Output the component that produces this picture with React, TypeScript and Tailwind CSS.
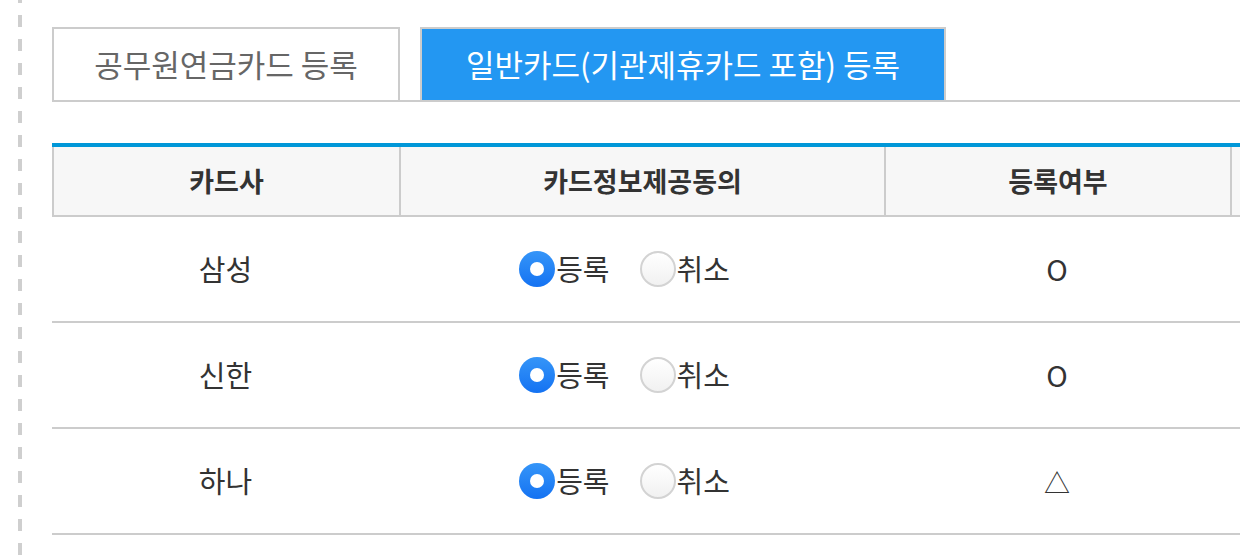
import React from 'react';

type Row = { company: string; status: string };

const rows: Row[] = [
  { company: '삼성', status: 'O' },
  { company: '신한', status: 'O' },
  { company: '하나', status: '△' },
];

function Radio({ checked, label }: { checked: boolean; label: string }) {
  return (
    <label className="flex items-center mr-[30px]">
      {checked ? (
        <span className="flex items-center justify-center w-[36px] h-[36px] rounded-full bg-gradient-to-b from-[#3595f8] to-[#1472f2]">
          <span className="w-[14px] h-[14px] rounded-full bg-white" />
        </span>
      ) : (
        <span className="w-[36px] h-[36px] rounded-full border-2 border-[#d3d3d3] bg-gradient-to-b from-white to-[#f1f1f1]" />
      )}
      <span className="ml-[1px] text-[29px] text-[#333]">{label}</span>
    </label>
  );
}

export default function App() {
  return (
    <div className="w-[1240px] h-[557px] overflow-hidden bg-white flex font-['Noto_Sans_CJK_KR',sans-serif]">
      <div className="ml-[18px] w-[4px] h-full shrink-0 bg-[repeating-linear-gradient(to_bottom,#cfcfcf_0px,#cfcfcf_3px,transparent_3px,transparent_15px,#cfcfcf_15px,#cfcfcf_24px)]" />

      <div className="ml-[30px] pt-[27px] flex-1 min-w-0">
        {/* tabs */}
        <div className="flex gap-[20px] border-b-2 border-[#cccccc] w-[1400px]">
          <button className="w-[348px] h-[75px] -mb-[2px] border-2 border-[#cccccc] bg-white text-[31px] text-[#666] flex items-center justify-center">
            공무원연금카드 등록
          </button>
          <button className="w-[526px] h-[75px] -mb-[2px] border-2 border-[#cccccc] bg-[#2397f2] text-[31px] text-white flex items-center justify-center">
            일반카드(기관제휴카드 포함) 등록
          </button>
        </div>

        {/* table */}
        <div className="mt-[41px] w-[1400px] border-t-4 border-[#0097d8]">
          <div className="flex h-[70px] bg-[#f7f7f7] border-b-2 border-[#cccccc] text-[27px] font-bold text-[#333]">
            <div className="w-[347px] border-l-2 border-[#cccccc] flex items-center justify-center">카드사</div>
            <div className="w-[485px] border-l-2 border-[#cccccc] flex items-center justify-center">카드정보제공동의</div>
            <div className="w-[346px] border-l-2 border-[#cccccc] flex items-center justify-center">등록여부</div>
            <div className="flex-1 border-l-2 border-[#cccccc]" />
          </div>

          {rows.map((r) => (
            <div key={r.company} className="flex h-[106px] border-b-2 border-[#cccccc] text-[29px] text-[#333]">
              <div className="w-[347px] flex items-center justify-center">{r.company}</div>
              <div className="w-[485px] flex items-center justify-center pr-[4px]">
                <Radio checked label="등록" />
                <Radio checked={false} label="취소" />
              </div>
              <div className={`w-[346px] flex items-center justify-center ${r.status === '△' ? 'text-[26px]' : ''}`}>
                {r.status}
              </div>
              <div className="flex-1" />
            </div>
          ))}
        </div>
      </div>
    </div>
  );
}
